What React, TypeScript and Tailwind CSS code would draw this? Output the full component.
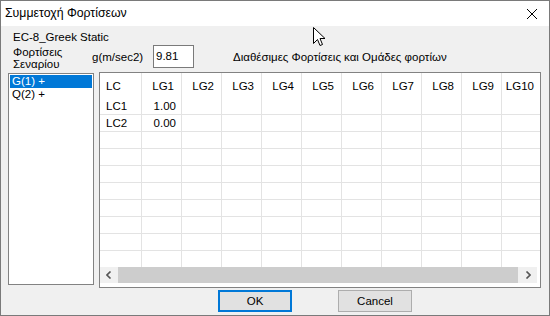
import React from 'react';

const columns = ['LG1', 'LG2', 'LG3', 'LG4', 'LG5', 'LG6', 'LG7', 'LG8', 'LG9', 'LG10'];

const rows: { name: string; values: string[] }[] = [
  { name: 'LC1', values: ['1.00'] },
  { name: 'LC2', values: ['0.00'] },
  ...Array.from({ length: 8 }, () => ({ name: '', values: [] as string[] })),
];

function Cursor() {
  return (
    <svg
      className="absolute left-[312px] top-[26px]"
      width="13"
      height="20"
      viewBox="0 0 13 20"
    >
      <path
        d="M0.5 0.5 L0.5 16.5 L4.5 12.5 L7 18.5 L9.5 17.5 L7 11.5 L12 11.5 Z"
        fill="#fff"
        stroke="#000"
        strokeWidth="1"
        strokeLinejoin="round"
      />
    </svg>
  );
}

function LoadGrid() {
  return (
    <div className="flex flex-col w-[442px] h-[216px] border border-[#828282] bg-white overflow-hidden">
      <div className="flex h-[25px] shrink-0">
        <div className="w-[42px] shrink-0 border-r border-[#e3e3e3] pl-[6px] pt-[7px]">LC</div>
        {columns.map((c) => (
          <div
            key={c}
            className="w-[40px] shrink-0 border-r border-[#e3e3e3] text-right pr-[7px] pt-[7px]"
          >
            {c}
          </div>
        ))}
      </div>
      <div className="flex-1 overflow-hidden">
        {rows.map((r, i) => (
          <div key={i} className="flex h-[17px] border-b border-[#e3e3e3]">
            <div className="w-[42px] shrink-0 border-r border-[#e3e3e3] pl-[6px] pt-[2px]">
              {r.name}
            </div>
            {columns.map((c, j) => (
              <div
                key={c}
                className="w-[40px] shrink-0 border-r border-[#e3e3e3] text-right pr-[5px] pt-[2px]"
              >
                {r.values[j] ?? ''}
              </div>
            ))}
          </div>
        ))}
      </div>
      <div className="flex h-[20px] shrink-0 pr-[3px] pb-[4px]">
        <div className="flex w-full h-[16px] bg-[#f0f0f0]">
          <div className="w-[18px] flex items-center justify-center">
            <svg width="6" height="8" viewBox="0 0 6 8">
              <path d="M4.5 0.5 L1 4 L4.5 7.5" fill="none" stroke="#555" strokeWidth="1.6" />
            </svg>
          </div>
          <div className="flex-1 bg-[#cdcdcd]" />
          <div className="w-[19px] flex items-center justify-center">
            <svg width="6" height="8" viewBox="0 0 6 8">
              <path d="M1.5 0.5 L5 4 L1.5 7.5" fill="none" stroke="#555" strokeWidth="1.6" />
            </svg>
          </div>
        </div>
      </div>
    </div>
  );
}

export default function App() {
  return (
    <div
      className="relative w-[550px] h-[316px] border border-[#7a7a7a] bg-[#f0f0f0] text-[11.5px] leading-[13px] text-black flex flex-col"
      style={{ fontFamily: '"Liberation Sans", Arial, sans-serif' }}
    >
      <div className="h-[25px] shrink-0 bg-white flex items-center justify-between pl-[4px] pr-[11px]">
        <span className="text-[12.3px]">Συμμετοχή Φορτίσεων</span>
        <svg width="12" height="12" viewBox="0 0 12 12">
          <path d="M1 1 L11 11 M11 1 L1 11" stroke="#000" strokeWidth="1" />
        </svg>
      </div>

      <div className="flex flex-col pl-[7px] pt-[5px]">
        <div className="pl-[5px] h-[13px]">EC-8_Greek Static</div>

        <div className="flex h-[28px] items-start">
          <div className="w-[84px] pl-[5px] pt-[2px] leading-[12px]">
            Φορτίσεις
            <br />
            Σεναρίου
          </div>
          <div className="w-[61px] pt-[7px]">g(m/sec2)</div>
          <div className="w-[41px] h-[23px] mt-[1px] border border-[#7a7a7a] bg-white pl-[2px] pt-[4px]">
            9.81
          </div>
          <div className="pl-[39px] pt-[7px]">Διαθέσιμες Φορτίσεις και Ομάδες φορτίων</div>
        </div>

        <div className="flex gap-[5px]">
          <div className="w-[86px] h-[212px] mt-[1px] border border-[#828282] bg-white p-[1px]">
            <div className="h-[13px] bg-[#0078d7] text-white pl-[2px]">G(1) +</div>
            <div className="h-[13px] pl-[2px]">Q(2) +</div>
          </div>
          <LoadGrid />
        </div>

        <div className="flex gap-[46px] pt-[2px] pl-[210px]">
          <button className="w-[74px] h-[22px] border-2 border-[#0078d7] bg-[#e1e1e1] text-[11.5px]">
            OK
          </button>
          <button className="w-[74px] h-[22px] border border-[#adadad] bg-[#e1e1e1] text-[11.5px]">
            Cancel
          </button>
        </div>
      </div>

      <Cursor />
    </div>
  );
}
